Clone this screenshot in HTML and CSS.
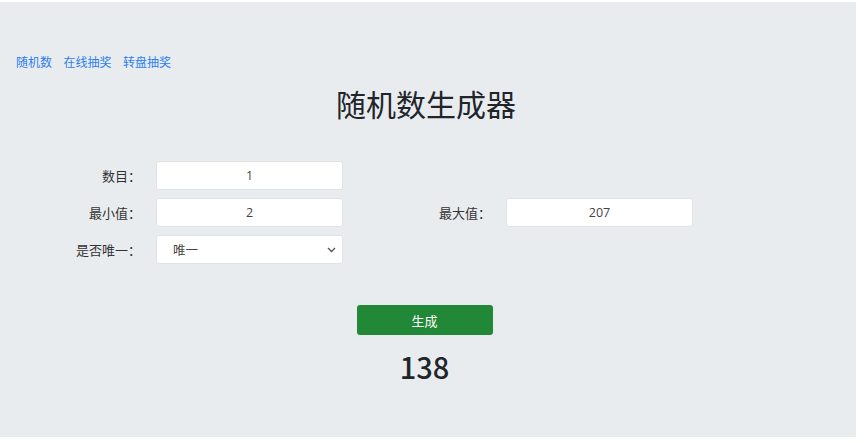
FILE: index.html
```html
<!DOCTYPE html>
<html lang="zh-CN">
<head>
<meta charset="utf-8">
<title>随机数生成器</title>
<link rel="stylesheet" href="styles.css">
</head>
<body>
<div class="page">
  <nav class="nav">
    <a href="#">随机数</a>
    <a href="#">在线抽奖</a>
    <a href="#">转盘抽奖</a>
  </nav>
  <h1 class="title">随机数生成器</h1>
  <div class="form">
    <label class="label">数目：</label>
    <input class="field" type="text" value="1">
    <span></span><span></span>
    <label class="label">最小值：</label>
    <input class="field" type="text" value="2">
    <label class="label">最大值：</label>
    <input class="field" type="text" value="207">
    <label class="label">是否唯一：</label>
    <div class="select">
      <span>唯一</span>
      <svg class="chev" width="9" height="6" viewBox="0 0 9 6"><path d="M1 1l3.5 3.5L8 1" fill="none" stroke="#555" stroke-width="1.3"/></svg>
    </div>
  </div>
  <div class="actions">
    <button class="btn">生成</button>
    <div class="result">138</div>
  </div>
</div>
</body>
</html>
```

FILE: styles.css
```css
html, body {
  margin: 0;
  padding: 0;
  background: #ffffff;
}
body {
  font-family: "Open Sans", "Noto Sans CJK SC", sans-serif;
  color: #212529;
}
.page {
  margin: 2px 9px 0 0;
  height: 435px;
  background: #e9ecef;
  box-sizing: border-box;
  padding-top: 51px;
  overflow: hidden;
}
.nav {
  display: flex;
  gap: 11.5px;
  padding-left: 16px;
  font-family: "Noto Sans CJK SC", sans-serif;
  font-size: 12px;
  line-height: 18px;
}
.nav a {
  color: #2c7ef0;
  text-decoration: none;
}
.title {
  margin: 12px 0 0;
  padding-right: 4px;
  text-align: center;
  font-family: "Noto Sans CJK SC", sans-serif;
  font-weight: 400;
  font-size: 30px;
  line-height: 40px;
  color: #212529;
}
.form {
  margin-top: 38px;
  display: grid;
  grid-template-columns: 141px 187px 133px 187px;
  column-gap: 15px;
  row-gap: 8px;
}
.label {
  font-family: "Noto Sans CJK SC", sans-serif;
  font-size: 13px;
  color: #333;
  text-align: right;
  line-height: 29px;
  height: 29px;
}
.field {
  box-sizing: border-box;
  height: 29px;
  width: 187px;
  border: 1px solid #dfe3e7;
  border-radius: 3px;
  background: #fff;
  text-align: center;
  font-family: "Open Sans", "Noto Sans CJK SC", sans-serif;
  font-size: 12.5px;
  color: #444;
  padding: 0;
  outline: none;
}
.select {
  box-sizing: border-box;
  height: 29px;
  width: 187px;
  border: 1px solid #dfe3e7;
  border-radius: 3px;
  background: #fff;
  display: flex;
  align-items: center;
  justify-content: space-between;
  padding: 0 6px 0 16px;
  font-family: "Noto Sans CJK SC", sans-serif;
  font-size: 12.5px;
  color: #444;
}
.actions {
  margin-top: 41px;
  display: flex;
  flex-direction: column;
  align-items: center;
  padding-right: 7px;
}
.btn {
  width: 136px;
  height: 30px;
  border: none;
  border-radius: 3px;
  background: #218838;
  color: #fff;
  font-family: "Noto Sans CJK SC", sans-serif;
  font-size: 13px;
  padding: 0;
}
.result {
  margin-top: 12px;
  font-family: "Noto Sans CJK SC", sans-serif;
  font-size: 29px;
  line-height: 38px;
  font-weight: 500;
  color: #212529;
}
```
